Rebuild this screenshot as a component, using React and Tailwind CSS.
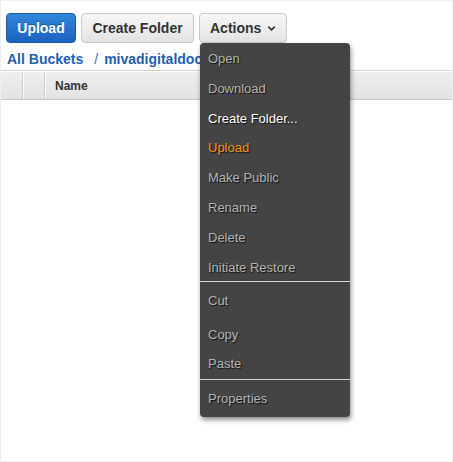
import { ChevronDown } from 'lucide-react';

const font = { fontFamily: '"Liberation Sans", Arial, sans-serif' };

const groupOne = [
  { label: 'Open', tone: 'muted' },
  { label: 'Download', tone: 'muted' },
  { label: 'Create Folder...', tone: 'active' },
  { label: 'Upload', tone: 'accent' },
  { label: 'Make Public', tone: 'muted' },
  { label: 'Rename', tone: 'muted' },
  { label: 'Delete', tone: 'muted' },
  { label: 'Initiate Restore', tone: 'muted' },
];

const toneClass = {
  muted: 'text-[#b4b4b4]',
  active: 'text-white',
  accent: 'text-[#f7941e]',
};

function MenuItem({ label, tone = 'muted', className = '' }) {
  return (
    <div className={`px-2 text-[13px] leading-[15px] [text-shadow:1px_1px_1px_#111] ${toneClass[tone]} ${className}`}>
      {label}
    </div>
  );
}

function ActionsMenu() {
  return (
    <div className="absolute left-[199px] top-[42px] w-[150px] bg-[#444444] rounded-[4px] shadow-[1px_3px_5px_rgba(0,0,0,0.45)] z-10">
      <div>
        {groupOne.map((item) => (
          <MenuItem key={item.label} {...item} className="h-[29.8px] pt-[8px]" />
        ))}
      </div>
      <div className="h-px bg-[#d6d6d6]" />
      <div className="pt-[11px] pb-[8px]">
        <MenuItem label="Cut" />
        <MenuItem label="Copy" className="mt-[19px]" />
        <MenuItem label="Paste" className="mt-[14px]" />
      </div>
      <div className="h-px bg-[#d6d6d6]" />
      <div className="pt-[11px] pb-[11px]">
        <MenuItem label="Properties" />
      </div>
    </div>
  );
}

export default function App() {
  return (
    <div style={font} className="relative w-[453px] h-[462px] bg-white border border-[#efefef] overflow-hidden">
      <div className="flex items-center gap-[5px] pl-[5px] pt-[12px]">
        <button className="h-[30px] w-[70px] rounded-[4px] border border-[#1b5aa8] bg-gradient-to-b from-[#3286dc] to-[#1c62c0] text-white text-[14px] font-bold [text-shadow:0_-1px_0_rgba(0,0,0,0.3)]">
          Upload
        </button>
        <button className="h-[30px] w-[113px] rounded-[4px] border border-[#c9c9c9] bg-gradient-to-b from-[#f7f7f7] to-[#e3e3e3] text-[#333] text-[14px] font-bold">
          Create Folder
        </button>
        <button className="h-[30px] w-[88px] pl-[10px] pr-[8px] rounded-[4px] border border-[#c9c9c9] bg-gradient-to-b from-[#f7f7f7] to-[#e3e3e3] text-[#333] text-[14px] font-bold flex items-center justify-between">
          Actions
          <ChevronDown size={11} strokeWidth={3.5} className="text-[#333] mr-[1px]" />
        </button>
      </div>

      <div className="flex items-center pl-[6px] mt-[8px] text-[14px] font-bold leading-[16px] text-[#1e5fb3]">
        <span>All Buckets</span>
        <span className="ml-[11px] mr-[6px] font-normal text-[#4a6fa0]">/</span>
        <span>mivadigitaldocs</span>
      </div>

      <div className="mt-[3px] border-t border-[#cfcfcf]">
        <div className="flex h-[29px] border-t border-white border-b border-b-[#c6c6c6] bg-gradient-to-b from-[#efefef] to-[#e2e2e2]">
          <div className="w-[22px] border-r border-[#cfcfcf]" />
          <div className="w-[22px] border-r border-[#cfcfcf] shadow-[inset_1px_0_0_#fafafa]" />
          <div className="flex items-center pl-[10px] text-[12px] font-bold text-[#333] shadow-[inset_1px_0_0_#fafafa]">
            Name
          </div>
        </div>
      </div>

      <ActionsMenu />
    </div>
  );
}
